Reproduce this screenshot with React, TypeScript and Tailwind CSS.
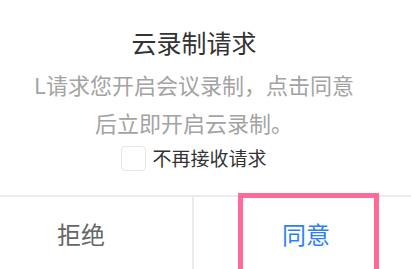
import React, { useState } from 'react';

export default function App() {
  const [noMore, setNoMore] = useState(false);

  return (
    <div
      className="relative w-[411px] h-[269px] overflow-hidden bg-white"
      style={{ fontFamily: '"Noto Sans CJK SC", "Noto Sans", sans-serif' }}
    >
      <div className="w-[448px] -ml-[30px] flex flex-col items-center">
        <h2 className="pt-[27px] text-[25px] leading-[30px] text-[#333333] font-normal">云录制请求</h2>
        <p className="mt-[8px] text-[22px] leading-[38px] text-[#a3a3a3] text-center">
          L请求您开启会议录制，点击同意
          <br />
          后立即开启云录制。
        </p>
        <label className="mt-[4px] h-[26px] flex items-center gap-[6px] cursor-pointer">
          <input
            type="checkbox"
            checked={noMore}
            onChange={(e) => setNoMore(e.target.checked)}
            className="appearance-none w-[25px] h-[25px] rounded-[4px] border border-[#e6e6e6] bg-white checked:bg-[#2d7ff9]"
          />
          <span className="text-[19px] leading-[26px] text-[#333333]">不再接收请求</span>
        </label>
        <div className="mt-[24px] w-full flex border-t-2 border-[#ebebeb]">
          <button className="w-[224px] h-[74px] text-[24px] text-[#666666] border-r-2 border-[#ebebeb]">拒绝</button>
          <button className="w-[224px] h-[74px] text-[24px] text-[#2d7ff9]">同意</button>
        </div>
      </div>
      <div className="absolute left-[238px] top-[193px] w-[141px] h-[90px] border-[5px] border-[#ff6b96] pointer-events-none" />
    </div>
  );
}
